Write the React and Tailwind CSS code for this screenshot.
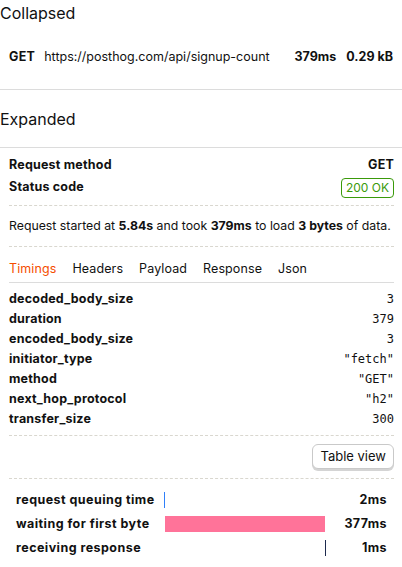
import React from "react";

const props = [
  ["decoded_body_size", "3"],
  ["duration", "379"],
  ["encoded_body_size", "3"],
  ["initiator_type", '"fetch"'],
  ["method", '"GET"'],
  ["next_hop_protocol", '"h2"'],
  ["transfer_size", "300"],
];

const total = 380;
const timings = [
  { label: "request queuing time", start: 0, dur: 2, value: "2ms", color: "bg-[#2f80fa]" },
  { label: "waiting for first byte", start: 2, dur: 377, value: "377ms", color: "bg-[#ff7399]" },
  { label: "receiving response", start: 379, dur: 1, value: "1ms", color: "bg-[#1d2a4e]" },
];

const tabs = ["Timings", "Headers", "Payload", "Response", "Json"];

const Dashed = ({ className = "" }) => (
  <div className={`border-t border-dashed border-[#d9d7cf] ${className}`} />
);

const App = () => {
  return (
    <div
      className="w-[402px] min-h-[567px] bg-white text-[#111111]"
      style={{ fontFamily: "Inter, 'Noto Sans', sans-serif" }}
    >
      <h2 className="h-[26px] text-[16px] leading-[26px]">Collapsed</h2>

      <div className="mt-[21px] flex h-[20px] items-center px-[9px] text-[12.5px]">
        <span className="font-bold tracking-[0.3px]">GET</span>
        <span className="ml-[9px] flex-1">https://posthog.com/api/signup-count</span>
        <span className="font-bold">379ms</span>
        <span className="ml-[10px] font-bold">0.29 kB</span>
      </div>

      <div className="mt-[22px] border-t border-[#dcdcdc]" />

      <h2 className="mt-[17px] h-[24px] text-[16px] leading-[24px]">Expanded</h2>

      <div className="mt-[16px] border-t border-[#dcdcdc]" />

      <div className="pl-[9px] pr-[8px] text-[12.5px]">
        <div className="mt-[7px] flex h-[20px] items-center justify-between font-bold tracking-[0.2px]">
          <span>Request method</span>
          <span>GET</span>
        </div>
        <div className="mt-[2px] flex h-[21px] items-center justify-between">
          <span className="font-bold tracking-[0.2px]">Status code</span>
          <span className="flex h-[20px] items-center rounded-[4px] border border-[#3a9a0a] px-[4px] text-[12px] text-[#3a9a0a]">
            200 OK
          </span>
        </div>

        <Dashed className="mt-[7px]" />

        <p className="mt-[10px] h-[20px] whitespace-nowrap text-[12.3px] leading-[20px]">
          Request started at <b>5.84s</b> and took <b>379ms</b> to load{" "}
          <b>3 bytes</b> of data.
        </p>

        <Dashed className="mt-[10px]" />

        <div className="flex gap-[16px] border-b border-[#dcdcdc] pt-[12px] pb-[3px] text-[12.5px] tracking-[0.1px]">
          {tabs.map((t, i) => (
            <span
              key={t}
              className={`h-[20px] leading-[20px] ${i === 0 ? "text-[#f54e00]" : ""}`}
            >
              {t}
            </span>
          ))}
        </div>

        <div className="mt-[6px]">
          {props.map(([k, v]) => (
            <div key={k} className="flex h-[20px] items-center justify-between">
              <span className="font-bold tracking-[0.2px]">{k}</span>
              <span
                className="text-[12px]"
                style={{ fontFamily: "'DejaVu Sans Mono', monospace" }}
              >
                {v}
              </span>
            </div>
          ))}
        </div>

        <Dashed className="mt-[6px]" />

        <div className="mt-[8px] flex justify-end">
          <button className="h-[25px] rounded-[6px] border border-[#c9c9c9] bg-white px-[7px] text-[13px] shadow-[0_2px_0_#d4d4d4]">
            Table view
          </button>
        </div>

        <Dashed className="mt-[9px]" />

        <div className="mt-[9px] px-[7px]">
          {timings.map((t) => (
            <div key={t.label} className="grid h-[24px] grid-cols-[148px_1fr_62px] items-center">
              <span className="font-bold tracking-[0.45px]">{t.label}</span>
              <div className="relative h-[16px]">
                <div
                  className={`absolute top-0 h-full min-w-[1px] ${t.color}`}
                  style={{
                    left: `${(t.start / total) * 100}%`,
                    width: `${(t.dur / total) * 100}%`,
                  }}
                />
              </div>
              <span className="text-right font-bold tracking-[0.4px]">{t.value}</span>
            </div>
          ))}
        </div>
      </div>
    </div>
  );
};

export default App;
